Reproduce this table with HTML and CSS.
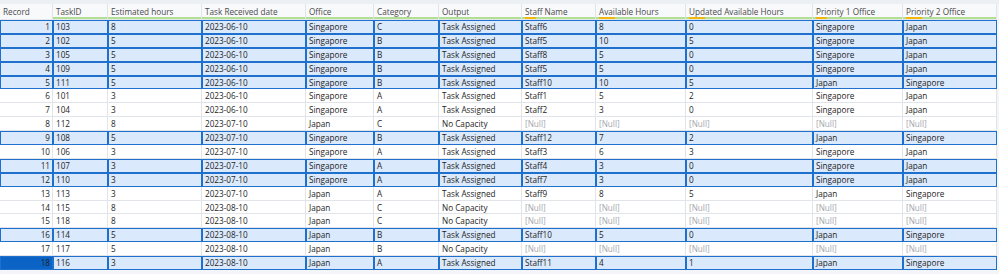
FILE: index.html
```html
<!DOCTYPE html>
<html>
<head>
<meta charset="utf-8">
<link rel="stylesheet" href="styles.css">
</head>
<body>
<div class="wrap">
  <div class="topstrip"></div>
  <div class="grid" id="grid">
    <div class="row head">
      <div class="c h rec">Record</div>
      <div class="c h g">TaskID</div>
      <div class="c h g">Estimated hours</div>
      <div class="c h g">Task Received date</div>
      <div class="c h g">Office</div>
      <div class="c h g">Category</div>
      <div class="c h g">Output</div>
      <div class="c h g o o12">Staff Name</div>
      <div class="c h g o o16">Available Hours</div>
      <div class="c h g o o16">Updated Available Hours</div>
      <div class="c h g o o12">Priority 1 Office</div>
      <div class="c h g o o16">Priority 2 Office</div>
    </div>
  </div>
</div>
<script src="script.js"></script>
</body>
</html>
```
FILE: script.js
```js
var data = [
  [1,103,8,"2023-06-10","Singapore","C","Task Assigned","Staff6","8","0","Singapore","Japan",1],
  [2,102,5,"2023-06-10","Singapore","B","Task Assigned","Staff5","10","5","Singapore","Japan",1],
  [3,105,5,"2023-06-10","Singapore","B","Task Assigned","Staff8","5","0","Singapore","Japan",1],
  [4,109,5,"2023-06-10","Singapore","B","Task Assigned","Staff5","5","0","Singapore","Japan",1],
  [5,111,5,"2023-06-10","Singapore","B","Task Assigned","Staff10","10","5","Japan","Singapore",1],
  [6,101,3,"2023-06-10","Singapore","A","Task Assigned","Staff1","5","2","Singapore","Japan",0],
  [7,104,3,"2023-06-10","Singapore","A","Task Assigned","Staff2","3","0","Singapore","Japan",0],
  [8,112,8,"2023-07-10","Japan","C","No Capacity",null,null,null,null,null,0],
  [9,108,5,"2023-07-10","Singapore","B","Task Assigned","Staff12","7","2","Japan","Singapore",1],
  [10,106,3,"2023-07-10","Singapore","A","Task Assigned","Staff3","6","3","Singapore","Japan",0],
  [11,107,3,"2023-07-10","Singapore","A","Task Assigned","Staff4","3","0","Singapore","Japan",1],
  [12,110,3,"2023-07-10","Singapore","A","Task Assigned","Staff7","3","0","Singapore","Japan",1],
  [13,113,3,"2023-07-10","Japan","A","Task Assigned","Staff9","8","5","Japan","Singapore",0],
  [14,115,8,"2023-08-10","Japan","C","No Capacity",null,null,null,null,null,0],
  [15,118,8,"2023-08-10","Japan","C","No Capacity",null,null,null,null,null,0],
  [16,114,5,"2023-08-10","Japan","B","Task Assigned","Staff10","5","0","Japan","Singapore",1],
  [17,117,5,"2023-08-10","Japan","B","No Capacity",null,null,null,null,null,0],
  [18,116,3,"2023-08-10","Japan","A","Task Assigned","Staff11","4","1","Japan","Singapore",2]
];
var grid = document.getElementById("grid");
data.forEach(function (r) {
  var row = document.createElement("div");
  row.className = "row" + (r[12] ? " sel" : "") + (r[12] === 2 ? " cur" : "");
  for (var i = 0; i < 12; i++) {
    var c = document.createElement("div");
    var v = r[i];
    c.className = "c" + (i === 0 ? " rec" : "") + (v === null ? " null" : "");
    c.textContent = v === null ? "[Null]" : String(v);
    row.appendChild(c);
  }
  grid.appendChild(row);
});
```
FILE: styles.css
```css
html, body {
  margin: 0;
  padding: 0;
  background: #f3f5f8;
}
.wrap {
  width: 999px;
  height: 274px;
  overflow: hidden;
  font-family: "Open Sans", "Noto Sans", sans-serif;
  font-size: 8.2px;
  color: #1e1e1e;
}
.topstrip {
  height: 4px;
  background: #eceff3;
}
.grid {
  display: grid;
  width: 997px;
  grid-template-columns: 53px 55px 94px 104px 68px 65px 83px 74px 90px 127px 90px 94px;
  grid-template-rows: 16px;
  grid-auto-rows: 13.9px;
  background: #ffffff;
}
.row {
  display: contents;
}
.c {
  box-sizing: border-box;
  padding: 0 3px;
  border-right: 1px solid #e1e4e8;
  border-bottom: 1px solid #e1e4e8;
  background: #ffffff;
  white-space: nowrap;
  overflow: hidden;
  display: flex;
  align-items: center;
}
.c.rec {
  justify-content: flex-end;
  padding-right: 2px;
}
.c.null {
  color: #a3a6ad;
}
.head .c {
  background: #f8f9fb;
  color: #4a4a4a;
  border-bottom: 1px solid #e4e7eb;
  position: relative;
}
.head .c.rec {
  justify-content: flex-start;
  padding-left: 3px;
}
.head .c.g::after {
  content: "";
  position: absolute;
  left: 0;
  right: 0;
  bottom: 0;
  height: 2px;
  background: #b3df94;
}
.head .c.o::before {
  content: "";
  position: absolute;
  left: 3px;
  bottom: 0;
  height: 2px;
  background: #f2b90c;
  z-index: 1;
}
.head .c.o12::before { width: 11px; }
.head .c.o16::before { width: 16px; }
.sel .c {
  background: #dae9fb;
  border-right-color: #1f6fcd;
  border-bottom-color: #1f6fcd;
  box-shadow: inset 1px 1px 0 #1f6fcd;
}
.cur .c.rec {
  background: #0b63c6;
}
```
